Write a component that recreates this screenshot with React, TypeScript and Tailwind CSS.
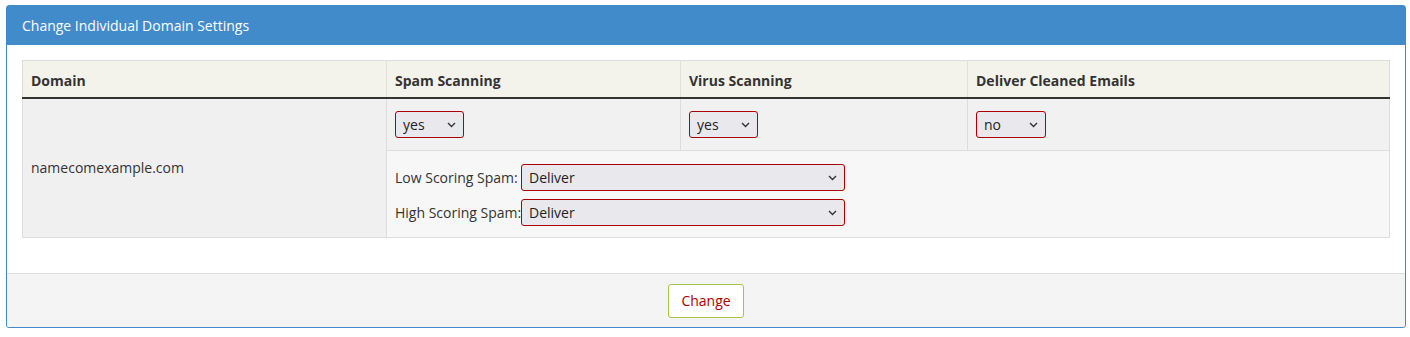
import React from "react";

function Select({ value, options, className }: { value: string; options: string[]; className: string }) {
  return (
    <div className={`relative inline-block align-middle ${className}`}>
      <select
        defaultValue={value}
        className="w-full h-full appearance-none bg-[#e9e9ed] border border-[#a00] rounded-[3px] pl-[7px] pr-6 text-[14px] text-[#222] outline-none"
      >
        {options.map((o) => (
          <option key={o} value={o}>
            {o}
          </option>
        ))}
      </select>
      <svg
        className="pointer-events-none absolute right-[8px] top-1/2 -translate-y-1/2"
        width="9"
        height="6"
        viewBox="0 0 9 6"
        fill="none"
      >
        <path d="M1 1l3.5 3.5L8 1" stroke="#333" strokeWidth="1.4" />
      </svg>
    </div>
  );
}

export default function App() {
  const spamOptions = ["Deliver", "Tag", "Quarantine", "Discard"];
  return (
    <div className="bg-white w-[1410px] h-[337px] pt-[5px] pl-[6px] text-[14px] text-[#333]" style={{ fontFamily: '"Open Sans", "Noto Sans", sans-serif' }}>
      <div className="w-[1400px] border border-[#428bca] rounded-[3px] bg-white">
        {/* Heading */}
        <div className="bg-[#428bca] text-white text-[14px] h-[39px] flex items-center px-[15px]">
          Change Individual Domain Settings
        </div>

        {/* Body */}
        <div className="px-[15px] pt-[15px] pb-[35px]">
          <table className="w-full border-collapse border border-[#ddd]">
            <thead>
              <tr className="bg-[#f3f3ec] text-left">
                <th className="w-[364px] h-[37px] pt-[3px] pl-[8px] pr-[9px] font-bold border-r border-[#e0e0d8] border-b-2 border-b-[#333]">Domain</th>
                <th className="w-[294px] pt-[3px] pl-[8px] pr-[9px] font-bold border-r border-[#e0e0d8] border-b-2 border-b-[#333]">Spam Scanning</th>
                <th className="w-[287px] pt-[3px] pl-[8px] pr-[9px] font-bold border-r border-[#e0e0d8] border-b-2 border-b-[#333]">Virus Scanning</th>
                <th className="pt-[3px] pl-[8px] pr-[9px] font-bold border-b-2 border-b-[#333]">Deliver Cleaned Emails</th>
              </tr>
            </thead>
            <tbody>
              <tr className="bg-[#f1f1f1]">
                <td rowSpan={2} className="pl-[8px] pr-[9px] align-middle bg-[#f0f0f0] border-r border-[#ddd]">
                  namecomexample.com
                </td>
                <td className="h-[53px] pt-[1px] pl-[8px] pr-[9px] border-r border-[#ddd] border-b border-b-[#ddd]">
                  <Select value="yes" options={["yes", "no"]} className="w-[69px] h-[27px]" />
                </td>
                <td className="pt-[1px] pl-[8px] pr-[9px] border-r border-[#ddd] border-b border-b-[#ddd]">
                  <Select value="yes" options={["yes", "no"]} className="w-[69px] h-[27px]" />
                </td>
                <td className="pt-[1px] pl-[8px] pr-[9px] border-b border-b-[#ddd]">
                  <Select value="no" options={["yes", "no"]} className="w-[70px] h-[27px]" />
                </td>
              </tr>
              <tr className="bg-[#f7f7f7]">
                <td colSpan={3} className="h-[87px] pt-[2px] pl-[8px] pr-[9px] align-middle">
                  <div className="flex flex-col gap-[8px]">
                    <div className="flex items-center">
                      <span className="w-[126px] shrink-0">Low Scoring Spam:</span>
                      <Select value="Deliver" options={spamOptions} className="w-[324px] h-[27px]" />
                    </div>
                    <div className="flex items-center">
                      <span className="w-[126px] shrink-0 whitespace-nowrap">High Scoring Spam:</span>
                      <Select value="Deliver" options={spamOptions} className="w-[324px] h-[27px]" />
                    </div>
                  </div>
                </td>
              </tr>
            </tbody>
          </table>
        </div>

        {/* Footer */}
        <div className="bg-[#f4f4f4] border-t border-[#ddd] h-[54px] flex items-center justify-center rounded-b-[3px]">
          <button className="w-[76px] h-[34px] bg-white border border-[#a8c34a] rounded-[3px] text-[#a00] text-[14px]">
            Change
          </button>
        </div>
      </div>
    </div>
  );
}
